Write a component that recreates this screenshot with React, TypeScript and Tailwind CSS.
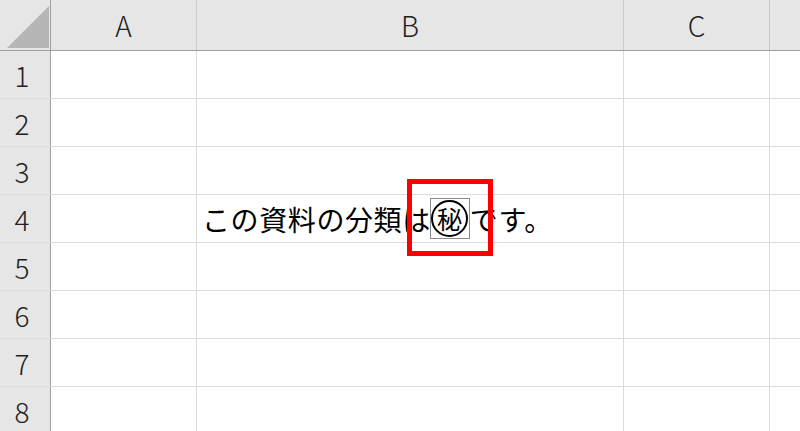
const cols = [
  { label: "A", w: "w-[146px]" },
  { label: "B", w: "w-[427px]" },
  { label: "C", w: "w-[146px]" },
];

const rows = [1, 2, 3, 4, 5, 6, 7, 8];

function Secret() {
  return (
    <span className="ml-[-1px] inline-flex h-[41px] w-[40px] items-center justify-center border border-[#8a8a8a] align-middle">
      <span className="flex h-[37px] w-[37px] items-center justify-center rounded-full border-2 border-black text-[25px] leading-none">
        秘
      </span>
    </span>
  );
}

export default function App() {
  const font = { fontFamily: '"Noto Sans CJK JP", "Noto Sans", sans-serif' };
  return (
    <div className="relative h-[431px] w-[800px] overflow-hidden bg-white text-[#1a1a1a]" style={font}>
      {/* column header */}
      <div className="flex h-[51px] border-b border-[#9f9f9f] bg-[#e6e6e6]">
        <div className="flex w-[51px] shrink-0 items-end justify-end border-r border-[#9f9f9f] pb-[2px] pr-[1px]">
          <svg width="42" height="42" viewBox="0 0 42 42">
            <polygon points="42,0 42,42 0,42" fill="#b5b5b5" />
          </svg>
        </div>
        {cols.map((c) => (
          <div
            key={c.label}
            className={`${c.w} flex shrink-0 items-center justify-center border-r border-[#c9c9c9] text-[28px] font-light text-[#222]`}
          >
            {c.label}
          </div>
        ))}
        <div className="flex-1" />
      </div>

      {rows.map((r) => (
        <div key={r} className="flex h-[48px] border-b border-[#dcdcdc]">
          <div className="flex w-[51px] shrink-0 items-center justify-center border-r border-[#9f9f9f] bg-[#e6e6e6] pr-[6px] text-[28px] font-light text-[#222]">
            {r}
          </div>
          <div className="w-[146px] shrink-0 border-r border-[#dcdcdc]" />
          <div className="flex w-[427px] shrink-0 items-center border-r border-[#dcdcdc] pl-[5px]">
            {r === 4 && (
              <span className="flex items-center whitespace-nowrap text-[28px] leading-none tracking-[0.6px] text-black">
                この資料の分類は
                <Secret />
                です。
              </span>
            )}
          </div>
          <div className="w-[146px] shrink-0 border-r border-[#dcdcdc]" />
          <div className="flex-1" />
        </div>
      ))}

      {/* highlight box */}
      <div className="pointer-events-none absolute left-[407px] top-[179px] h-[77px] w-[86px] border-[5px] border-[#ff0000]" />
    </div>
  );
}
